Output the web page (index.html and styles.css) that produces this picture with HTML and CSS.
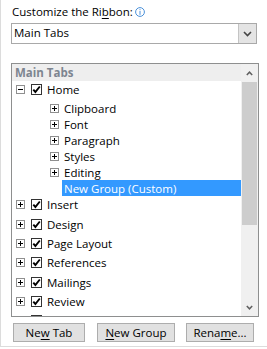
FILE: index.html
```html
<!DOCTYPE html>
<html>
<head>
<meta charset="utf-8">
<link rel="stylesheet" href="styles.css">
</head>
<body>
<div class="panel">
  <div class="label"><span>Customize the Ri<u>b</u>bon:</span><span class="info"><svg width="10" height="10" viewBox="0 0 10 10"><circle cx="5" cy="5" r="4.4" fill="none" stroke="#4a90d9" stroke-width="1"/><rect x="4.5" y="2.2" width="1" height="1" fill="#4a90d9"/><rect x="4.5" y="4" width="1" height="3.8" fill="#4a90d9"/></svg></span></div>
  <div class="select">
    <div class="select-text">Main Tabs</div>
    <div class="select-btn"><svg width="9" height="6" viewBox="0 0 9 6"><path d="M1 1 L4.5 4.5 L8 1" fill="none" stroke="#444" stroke-width="1.6"/></svg></div>
  </div>
  <div class="listbox">
    <div class="tree">
      <div class="header">Main Tabs</div>
      <div class="row top">
        <span class="toggle"><i class="h"></i></span>
        <span class="check"><svg width="9" height="9" viewBox="0 0 9 9"><path d="M1.3 4.6 L3.4 7 L7.8 1.5" fill="none" stroke="#000" stroke-width="1.9"/></svg></span>
        <span class="name">Home</span>
      </div>
      <div class="row child"><span class="toggle"><i class="h"></i><i class="v"></i></span><span class="name">Clipboard</span></div>
      <div class="row child"><span class="toggle"><i class="h"></i><i class="v"></i></span><span class="name">Font</span></div>
      <div class="row child"><span class="toggle"><i class="h"></i><i class="v"></i></span><span class="name">Paragraph</span></div>
      <div class="row child"><span class="toggle"><i class="h"></i><i class="v"></i></span><span class="name">Styles</span></div>
      <div class="row child"><span class="toggle"><i class="h"></i><i class="v"></i></span><span class="name">Editing</span></div>
      <div class="row child selected"><span class="name">New Group (Custom)</span></div>
      <div class="row top">
        <span class="toggle"><i class="h"></i><i class="v"></i></span>
        <span class="check"><svg width="9" height="9" viewBox="0 0 9 9"><path d="M1.3 4.6 L3.4 7 L7.8 1.5" fill="none" stroke="#000" stroke-width="1.9"/></svg></span>
        <span class="name">Insert</span>
      </div>
      <div class="row top">
        <span class="toggle"><i class="h"></i><i class="v"></i></span>
        <span class="check"><svg width="9" height="9" viewBox="0 0 9 9"><path d="M1.3 4.6 L3.4 7 L7.8 1.5" fill="none" stroke="#000" stroke-width="1.9"/></svg></span>
        <span class="name">Design</span>
      </div>
      <div class="row top">
        <span class="toggle"><i class="h"></i><i class="v"></i></span>
        <span class="check"><svg width="9" height="9" viewBox="0 0 9 9"><path d="M1.3 4.6 L3.4 7 L7.8 1.5" fill="none" stroke="#000" stroke-width="1.9"/></svg></span>
        <span class="name">Page Layout</span>
      </div>
      <div class="row top">
        <span class="toggle"><i class="h"></i><i class="v"></i></span>
        <span class="check"><svg width="9" height="9" viewBox="0 0 9 9"><path d="M1.3 4.6 L3.4 7 L7.8 1.5" fill="none" stroke="#000" stroke-width="1.9"/></svg></span>
        <span class="name">References</span>
      </div>
      <div class="row top">
        <span class="toggle"><i class="h"></i><i class="v"></i></span>
        <span class="check"><svg width="9" height="9" viewBox="0 0 9 9"><path d="M1.3 4.6 L3.4 7 L7.8 1.5" fill="none" stroke="#000" stroke-width="1.9"/></svg></span>
        <span class="name">Mailings</span>
      </div>
      <div class="row top">
        <span class="toggle"><i class="h"></i><i class="v"></i></span>
        <span class="check"><svg width="9" height="9" viewBox="0 0 9 9"><path d="M1.3 4.6 L3.4 7 L7.8 1.5" fill="none" stroke="#000" stroke-width="1.9"/></svg></span>
        <span class="name">Review</span>
      </div>
      <div class="row top">
        <span class="toggle"><i class="h"></i><i class="v"></i></span>
        <span class="check"><svg width="9" height="9" viewBox="0 0 9 9"><path d="M1.3 4.6 L3.4 7 L7.8 1.5" fill="none" stroke="#000" stroke-width="1.9"/></svg></span>
        <span class="name">View</span>
      </div>
    </div>
    <div class="scrollbar">
      <div class="arrow"><svg width="7" height="5" viewBox="0 0 7 5"><path d="M0.8 4 L3.5 1.2 L6.2 4" fill="none" stroke="#606060" stroke-width="1.5"/></svg></div>
      <div class="thumb"></div>
      <div class="track"></div>
      <div class="arrow"><svg width="7" height="5" viewBox="0 0 7 5"><path d="M0.8 1 L3.5 3.8 L6.2 1" fill="none" stroke="#606060" stroke-width="1.5"/></svg></div>
    </div>
  </div>
  <div class="buttons">
    <div class="btn b1"><span>Ne<u>w</u> Tab</span></div>
    <div class="btn b2"><span><u>N</u>ew Group</span></div>
    <div class="btn b3"><span>Rena<u>m</u>e...</span></div>
  </div>
</div>
</body>
</html>
```
FILE: styles.css
```css
html, body {
  margin: 0;
  padding: 0;
  background: #ffffff;
}
body {
  font-family: "Open Sans", "Liberation Sans", sans-serif;
  font-size: 11.5px;
  color: #000;
}
u {
  text-decoration: underline;
  text-underline-offset: 2px;
}
.panel {
  width: 263px;
  height: 346px;
  border-left: 1px solid #dcdcdc;
  border-right: 1px solid #dcdcdc;
  border-bottom: 1px solid #dcdcdc;
  padding-left: 10px;
  box-sizing: content-box;
  display: flex;
  flex-direction: column;
}
.panel > * { flex: none; }
.label {
  height: 16px;
  margin-top: 4px;
  padding-left: 1px;
  line-height: 16px;
  display: flex;
  align-items: center;
  white-space: nowrap;
}
.info {
  display: inline-flex;
  margin-left: 2px;
  margin-top: -1px;
}
.select {
  margin-top: 3px;
  width: 246px;
  height: 21px;
  box-sizing: border-box;
  border: 1px solid #a9a9a9;
  display: flex;
}
.select-text {
  flex: 1;
  padding-left: 2px;
  line-height: 18px;
}
.select-btn {
  width: 17px;
  background: #e4e4e4;
  border-left: 1px solid #c4c4c4;
  display: flex;
  align-items: center;
  justify-content: center;
}
.listbox {
  margin-top: 19px;
  width: 248px;
  height: 254px;
  box-sizing: border-box;
  border: 1px solid #8e8f8f;
  display: flex;
  overflow: hidden;
}
.tree {
  flex: 1;
  display: flex;
  flex-direction: column;
  overflow: hidden;
}
.tree > * { flex: none; }
.header {
  height: 17px;
  background: #eeeeee;
  color: #7d8590;
  font-weight: 700;
  padding-left: 3px;
  line-height: 17px;
}
.row {
  display: flex;
  align-items: center;
}
.row.top {
  height: 19.3px;
  padding-left: 4px;
  padding-bottom: 2px;
  box-sizing: border-box;
}
.row.child {
  height: 16px;
  padding-left: 38px;
}
.row.selected {
  margin-left: 50px;
  padding-left: 2px;
  background: #3399ff;
  color: #fff;
}
.toggle {
  position: relative;
  width: 9px;
  height: 9px;
  box-sizing: border-box;
  border: 1px solid #8f8f8f;
  background: #fff;
  flex: none;
}
.toggle .h {
  position: absolute;
  left: 1px;
  top: 3px;
  width: 5px;
  height: 1px;
  background: #000;
}
.toggle .v {
  position: absolute;
  left: 3px;
  top: 1px;
  width: 1px;
  height: 5px;
  background: #000;
}
.check {
  width: 11px;
  height: 11px;
  box-sizing: border-box;
  border: 1px solid #333;
  background: #fff;
  margin-left: 6px;
  display: flex;
  flex: none;
}
.check svg { display: block; margin: 0; }
.top .name { margin-left: 5px; }
.child .toggle + .name { margin-left: 5px; }
.name { white-space: nowrap; }
.scrollbar {
  width: 17px;
  background: #f0f0f0;
  display: flex;
  flex-direction: column;
}
.arrow {
  height: 18px;
  display: flex;
  align-items: center;
  justify-content: center;
  flex: none;
}
.thumb {
  height: 143px;
  margin: 0 1px;
  background: #cdcdcd;
  flex: none;
}
.track { flex: 1; }
.buttons {
  display: flex;
  margin-top: 6px;
  padding-left: 2px;
}
.btn {
  height: 19px;
  box-sizing: border-box;
  border: 1px solid #adadad;
  background: #e1e1e1;
  display: flex;
  align-items: center;
  justify-content: center;
  white-space: nowrap;
}
.b1 { width: 72px; }
.b2 { width: 78px; margin-left: 12px; }
.b3 { width: 68px; margin-left: 11px; }
```
